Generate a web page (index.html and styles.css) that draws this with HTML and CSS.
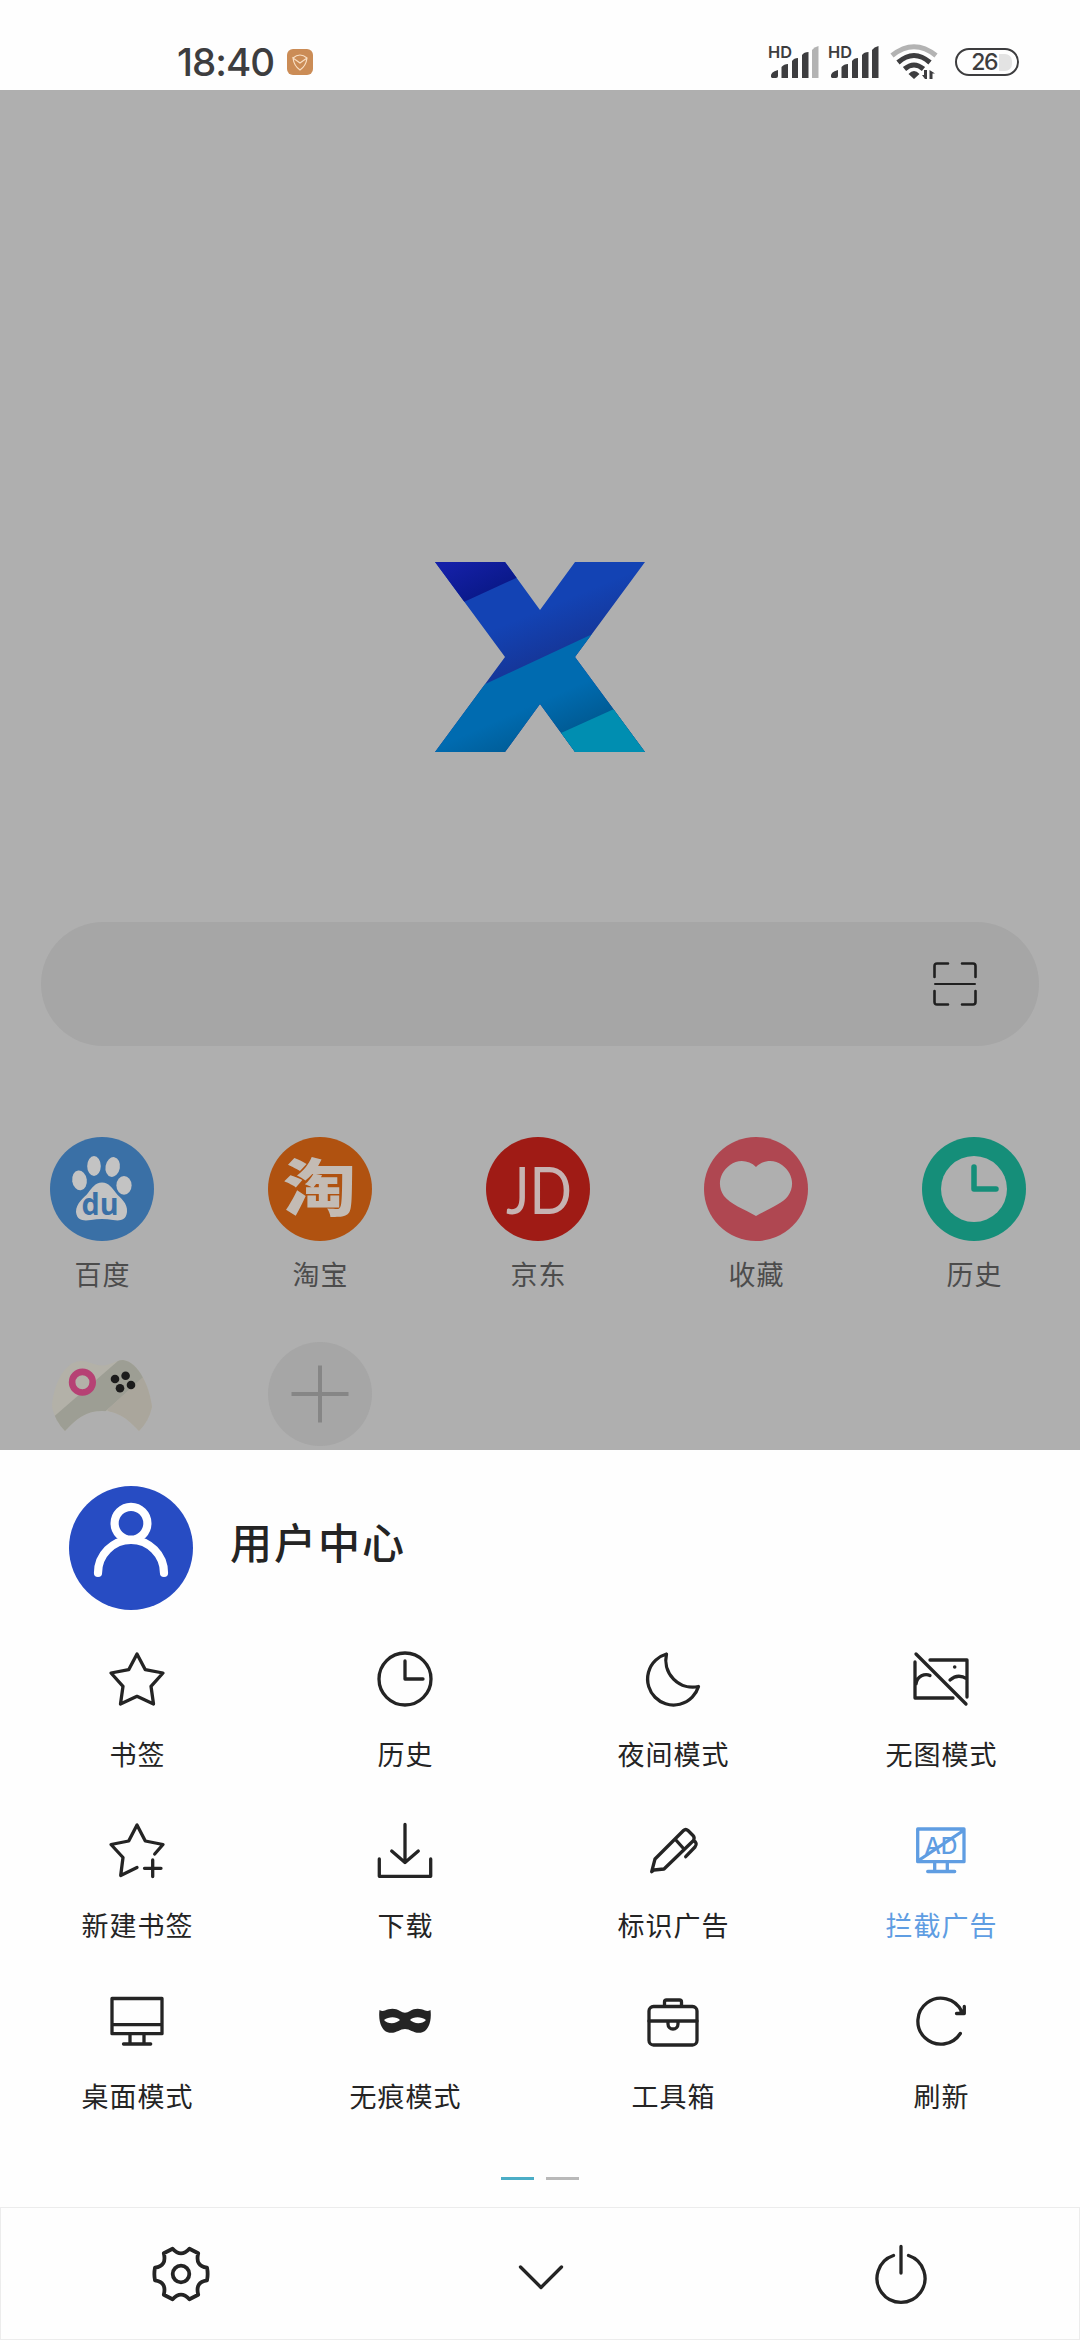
FILE: index.html
```html
<!DOCTYPE html>
<html lang="zh-CN">
<head>
<meta charset="utf-8">
<title>浏览器</title>
<link rel="stylesheet" href="styles.css">
</head>
<body>
<header class="status">
  <div class="status-left">
    <span class="time">18:40</span>
    <svg class="badge" viewBox="0 0 26 26"><rect width="26" height="26" rx="6" fill="#cb8c56"/><path d="M6 9Q13 3 20 9Q19 17 13 21Q7 17 6 9L13 14L20 9" fill="none" stroke="#f9dfc3" stroke-width="1.2"/></svg>
  </div>
  <div class="status-right">
    <svg class="signal" viewBox="0 0 50 34"><text class="hd" x="-1" y="13" textLength="24" lengthAdjust="spacingAndGlyphs">HD</text><g fill="#3d3d3f"><path d="M2 32Q1 27 9 25V31Q9 33 7 33H3ZM12.500 22Q15 19 19 19V33H12.500ZM23 16Q25 13 29 13V33H23ZM33 10Q35 7 39.500 7V33H33Z"/><path d="M43 5Q45 2 49.500 1V33H43Z" fill="#b3b3b3"/></g></svg>
    <svg class="signal" viewBox="0 0 50 34"><text class="hd" x="-1" y="13" textLength="24" lengthAdjust="spacingAndGlyphs">HD</text><path fill="#3d3d3f" d="M2 32Q1 27 9 25V31Q9 33 7 33H3ZM12.500 22Q15 19 19 19V33H12.500ZM23 16Q25 13 29 13V33H23ZM33 10Q35 7 39.500 7V33H33ZM43 5Q45 2 49.500 1V33H43Z"/></svg>
    <svg class="wifi" viewBox="0 0 48 36"><g fill="none" stroke-width="5"><path d="M1 11.500Q23 -6 45 11.500" stroke="#b3b3b3"/><path d="M7 18.500Q23 4.500 39 18.500M13.500 25Q23 17 32.500 25" stroke="#3d3d3f"/></g><path d="M17.500 30Q23 24 28.500 30L23 35ZM33 26h3v9h-2L31 31h2ZM38.500 35V26L44 29.500H41.500V35Z" fill="#3d3d3f"/></svg>
    <div class="battery">26<i></i></div>
  </div>
</header>

<main class="home">
  <svg class="logo" viewBox="0 0 210 190">
    <defs>
      <clipPath id="x"><path d="M0 0H70L105 48L140 0H210L140 95L210 190H140L105 142L70 190H0L70 95Z"/></clipPath>
      <linearGradient id="a" gradientUnits="userSpaceOnUse" x1="35" y1="-10" x2="55" y2="30"><stop offset="0" stop-color="#1520a8"/><stop offset="1" stop-color="#0a198a"/></linearGradient>
      <linearGradient id="b" gradientUnits="userSpaceOnUse" x1="88" y1="55" x2="105" y2="96"><stop offset="0" stop-color="#1343b4"/><stop offset="1" stop-color="#15379b"/></linearGradient>
      <linearGradient id="c" gradientUnits="userSpaceOnUse" x1="138" y1="125" x2="153" y2="159"><stop offset="0" stop-color="#006bb0"/><stop offset="1" stop-color="#005c96"/></linearGradient>
    </defs>
    <g clip-path="url(#x)"><path d="M0 0H210V190H0Z" fill="url(#b)"/><path d="M0 0H116L31 39L0 53Z" fill="url(#a)"/><path d="M0 145.500L210 47.500V190H0Z" fill="url(#c)"/><path d="M84 190L210 133V190Z" fill="#008eb1"/></g>
  </svg>

  <div class="search">
    <svg class="scan" viewBox="0 0 44 44"><path d="M1.500 15V4Q1.500 1.500 4 1.500H15M29 1.500H40Q42.500 1.500 42.500 4V15M42.500 29V40Q42.500 42.500 40 42.500H29M15 42.500H4Q1.500 42.500 1.500 40V29"/><path d="M2 22H42" stroke-width="2"/></svg>
  </div>

  <div class="sites">
    <div class="site">
      <svg viewBox="-52 -52 104 104"><circle r="52" fill="#3a70a6"/><g fill="#c3c3c3"><ellipse cx="-22.500" cy="-8.600" rx="7.300" ry="10" transform="rotate(-8 -22.500 -8.600)"/><ellipse cx="-8" cy="-23" rx="6.800" ry="10"/><ellipse cx="10.700" cy="-22" rx="7.200" ry="10" transform="rotate(10 10.700 -22)"/><ellipse cx="22" cy="-3.600" rx="7.600" ry="9.300"/><path d="M0 -6.500C7 -6.500 10 -1 14 4S26 14 25 23C24 32 17 32 11 31Q0 29 -11 31C-18 32 -25 32 -26 23C-26 14 -18 9 -14 4S-7 -6.500 0 -6.500Z"/></g><text class="du" x="-20.500" y="25.500" textLength="37" lengthAdjust="spacingAndGlyphs">du</text></svg>
      <span>百度</span>
    </div>
    <div class="site">
      <svg viewBox="-52 -52 104 104"><circle r="52" fill="#b05210"/><text class="tao" x="-37" y="22" textLength="73" lengthAdjust="spacingAndGlyphs">淘</text></svg>
      <span>淘宝</span>
    </div>
    <div class="site">
      <svg viewBox="-52 -52 104 104"><circle r="52" fill="#9f1b15"/><text class="jd" x="-32" y="24.500" textLength="66" lengthAdjust="spacingAndGlyphs">JD</text></svg>
      <span>京东</span>
    </div>
    <div class="site">
      <svg viewBox="-52 -52 104 104"><circle r="52" fill="#af4751"/><path d="M0 -22C-7 -29 -18 -30 -26 -24C-37 -16 -39 -3 -32 7C-26 15 -12 20 0 27C12 20 26 15 32 7C39 -3 37 -16 26 -24C18 -30 7 -29 0 -22Z" fill="#afafaf"/></svg>
      <span>收藏</span>
    </div>
    <div class="site">
      <svg viewBox="-52 -52 104 104"><circle r="52" fill="#158e79"/><circle r="33" fill="#afafaf"/><path d="M0 -22V0H22" fill="none" stroke="#158e79" stroke-width="5.500" stroke-linecap="round" stroke-linejoin="round"/></svg>
      <span>历史</span>
    </div>
    <div class="site">
      <svg viewBox="-52 -52 104 104"><defs><clipPath id="pad"><path d="M-22 -33C-14 -34 -9 -28.600 0 -28.600S14 -34 21 -34C37 -32 48 -6 50 13Q47 27 37 37C25 24 16 17 0 17S-25 24 -37 37Q-47 27 -50 13C-49 -8 -38 -32 -22 -33Z"/></clipPath></defs><g clip-path="url(#pad)"><path d="M-52 -40H52V40H-52Z" fill="#b3b1a8"/><path d="M-52 26L24 -40L43 -18L-22 40H-52Z" fill="#9d9e94"/><path d="M42 -18L5 16L37 40H52V-18Z" fill="#aaa69c"/></g><circle cx="-19.600" cy="-11.800" r="10.300" fill="none" stroke="#b64174" stroke-width="6.600"/><g fill="#1c1c1c"><circle cx="13" cy="-15" r="4.300"/><circle cx="23.600" cy="-18.300" r="4.300"/><circle cx="18" cy="-5.700" r="4.300"/><circle cx="29" cy="-9" r="4.300"/></g></svg>
    </div>
    <div class="site">
      <svg viewBox="-52 -52 104 104"><circle r="52" fill="#a6a6a6"/><path d="M-28.500 0H28.500M0 -28.500V28.500" stroke="#868686" stroke-width="4"/></svg>
    </div>
  </div>
</main>

<section class="sheet">
  <div class="user">
    <svg class="avatar" viewBox="-62 -62 124 124"><circle r="62" fill="#274cc3"/><g fill="none" stroke="#fff" stroke-width="8.200" stroke-linecap="round"><circle cy="-24.700" r="16.400"/><path d="M-33 25A33 33 0 0 1 33 25"/></g></svg>
    <span class="user-name">用户中心</span>
  </div>

  <div class="menu">
    <div class="item"><svg viewBox="-30 -30 60 60"><path d="M0 -25L8.300 -9.300L26 -6L14 7.300L16.500 25L0 17.300L-16.500 25L-14 7.300L-26 -6L-8.300 -9.300Z"/></svg><span>书签</span></div>
    <div class="item"><svg viewBox="-30 -30 60 60"><circle r="26"/><path d="M0 -18V0H18"/></svg><span>历史</span></div>
    <div class="item"><svg viewBox="-30 -30 60 60"><path d="M-6.500 -25A26 26 0 1 0 25.500 7.500A27 27 0 0 1 -6.500 -25Z"/></svg><span>夜间模式</span></div>
    <div class="item"><svg viewBox="-30 -30 60 60"><path d="M-25 -25L25 25M-11 -19H26V18M-26 -17V19H12M-25 5C-24 -3 -16 -6 -11 -3.500M9 1Q17 -6 26 0"/><circle cx="13.700" cy="-12" r="1.800" fill="currentColor" stroke="none"/></svg><span>无图模式</span></div>
    <div class="item"><svg viewBox="-30 -30 60 60"><path d="M17.700 4L26 -5.500L8.300 -9L0 -25L-8.300 -9L-26 -5.500L-14 7.500L-16.300 25.500L0 17.500M15.700 10V26.500M7.500 18.300H24"/></svg><span>新建书签</span></div>
    <div class="item"><svg viewBox="-30 -30 60 60"><path d="M0 -25.500V12.500M-13.300 1L0 12.500L13.300 1M-25.700 9V26.300H25.700V9"/></svg><span>下载</span></div>
    <div class="item"><svg viewBox="-30 -30 60 60"><path d="M-21.300 21.700L-18 9L10.500 -19.500Q12.700 -21.700 15 -19.500L20 -14.500Q22 -12.500 20.500 -9.500L-9 19L-19 20ZM2 -11L10.500 -1.500M20.500 -9.500Q25 -7 22 -3L12.700 6.700"/></svg><span>标识广告</span></div>
    <div class="item active"><svg viewBox="-30 -30 60 60"><path d="M-23.300 -21H23V11.700H-23.300ZM-21 9.500L21 -18.500M-6.300 12V21.500M6.300 12V21.500M-13.300 21.500H13.700"/><text class="ad" x="-16.500" y="4" textLength="33" lengthAdjust="spacingAndGlyphs">AD</text></svg><span>拦截广告</span></div>
    <div class="item"><svg viewBox="-30 -30 60 60"><path d="M-25 -22.500H25V12.700H-25ZM-25 3.700H25M-7 13V23M7 13V23M-13.500 23H13.700"/></svg><span>桌面模式</span></div>
    <div class="item"><svg viewBox="-30 -30 60 60"><path fill="currentColor" stroke="none" fill-rule="evenodd" d="M-25.500 -11Q-23 -9.500 -20 -10.500C-16 -12.500 -10 -13.500 -5 -10Q0 -6.500 5 -10C10 -13.500 16 -12.500 20 -10.500Q23 -9.500 25.500 -11C27 1 23 9 18 11C10 14 6 8 0 8S-10 14 -18 11C-23 9 -27 1 -25.500 -11ZM-21 -1C-16 -5 -8 -4.500 -5 -1C-9 3 -17 3.500 -21 -1ZM21 -1C16 -5 8 -4.500 5 -1C9 3 17 3.500 21 -1Z"/></svg><span>无痕模式</span></div>
    <div class="item"><svg viewBox="-30 -30 60 60"><rect x="-24" y="-14.500" width="48" height="38.500" rx="4.500"/><path d="M-8.500 -15V-19Q-8.500 -21 -6.500 -21H6.500Q8.500 -21 8.500 -19V-15M-24 0H24M-5 0V3A5 5 0 0 0 5 3V0"/></svg><span>工具箱</span></div>
    <div class="item"><svg viewBox="-30 -30 60 60"><path d="M19.300 12.500A23 23 0 1 1 20.500 -10M23.300 -14.500V-7.500H15.500M20 -10L23 -7.500"/></svg><span>刷新</span></div>
  </div>

  <div class="pager"><i class="on"></i><i></i></div>
</section>

<nav class="bottom">
  <svg viewBox="-30 -30 60 60"><path stroke-width="3.800" d="M-8.400 -25.300Q0 -16 8.400 -25.300L17.200 -20.700Q14 -8 26 -6.300Q27.300 0 26 6.300Q14 8 17.200 20.700L8.400 25.300Q0 16 -8.400 25.300L-17.200 20.700Q-14 8 -26 6.300Q-27.300 0 -26 -6.300Q-14 -8 -17.200 -20.700Z"/><circle r="8.300" stroke-width="3.800"/></svg>
  <svg viewBox="-30 -30 60 60"><path d="M-20.500 -7L0 13.500L20.500 -7"/></svg>
  <svg viewBox="-30 -30 60 60"><path d="M-7.500 -18.500A24 24 0 1 0 7.500 -18.500M0 -27.500V-1"/></svg>
</nav>
</body>
</html>
```
FILE: styles.css
```css
* { box-sizing: border-box; }

body {
  margin: 0;
  width: 1080px;
  height: 2340px;
  display: flex;
  flex-direction: column;
  background: #fefefe;
  color: #242424;
  font-family: "Noto Sans CJK SC", sans-serif;
  overflow: hidden;
}

svg { display: block; flex: none; overflow: visible; }

.status {
  height: 90px;
  padding: 34px 61px 0 177px;
  display: flex;
  justify-content: space-between;
  align-items: flex-start;
  color: #3d3d3f;
}
.status-left { display: flex; align-items: center; gap: 13px; height: 56px; }
.time { width: 97px; font: 500 38.500px/56px Inter, sans-serif; white-space: nowrap; letter-spacing: -1px; }
.badge { width: 26px; height: 26px; }
.status-right { display: flex; align-items: center; height: 56px; }
.signal { width: 50px; height: 34px; margin-right: 10px; }
.hd { font: 600 16.500px Inter, sans-serif; fill: #3d3d3f; }
.wifi { width: 48px; height: 36px; margin: 0 16px 0 2px; }
.battery {
  width: 64px;
  height: 28px;
  border: 2.500px solid #3d3d3f;
  border-radius: 14px;
  display: flex;
  align-items: center;
  justify-content: flex-end;
  gap: 2px;
  padding-right: 5px;
  font: 500 23px/23px Inter, sans-serif;
  letter-spacing: -1.500px;
}
.battery i { width: 13px; height: 17px; background: #e3e3e3; border-radius: 0 7px 7px 0; }

.home {
  height: 1360px;
  background: #afafaf;
  display: flex;
  flex-direction: column;
  overflow: hidden;
}
.logo { width: 210px; height: 190px; margin: 472px 0 170px 435px; }
.search {
  flex: none;
  height: 124px;
  margin: 0 41px;
  padding-right: 62px;
  border-radius: 62px;
  background: #a6a6a6;
  display: flex;
  align-items: center;
  justify-content: flex-end;
}
.scan { width: 44px; height: 44px; fill: none; stroke: #202020; stroke-width: 2.600; stroke-linecap: round; }
.sites {
  flex: none;
  margin: 91px 0 0 -7px;
  display: grid;
  grid-template-columns: repeat(5, 218px);
  grid-auto-rows: 205px;
}
.site { display: flex; flex-direction: column; align-items: center; gap: 13px; }
.site svg { width: 104px; height: 104px; }
.site span { font-size: 27px; line-height: 40px; letter-spacing: 1px; color: #4c4c4c; padding-left: 1px; }
.du { font: 700 30px "Open Sans", sans-serif; fill: #3a70a6; }
.tao { font: 900 62px "Noto Sans CJK SC", sans-serif; fill: #c3bbb4; }
.jd { font: 400 66px Lato, sans-serif; fill: #c6b3b2; }

.sheet { height: 757px; padding: 36px 0 0; display: flex; flex-direction: column; }
.user { display: flex; align-items: center; padding-left: 69px; gap: 37px; height: 124px; }
.avatar { width: 124px; height: 124px; }
.user-name { font-size: 42px; font-weight: 500; line-height: 60px; letter-spacing: 2px; padding-bottom: 14px; }
.menu {
  display: grid;
  grid-template-columns: repeat(4, 268px);
  grid-auto-rows: 171px;
  padding: 39px 0 0 3px;
}
.item { display: flex; flex-direction: column; align-items: center; gap: 25px; }
.item svg, .bottom svg {
  width: 60px;
  height: 60px;
  fill: none;
  stroke: currentColor;
  stroke-width: 3.300;
  stroke-linecap: round;
  stroke-linejoin: round;
}
.item span { font-size: 27px; line-height: 40px; letter-spacing: 1px; padding-left: 1px; }
.item.active { color: #5f9de2; }
.ad { font: 500 23px Inter, sans-serif; fill: currentColor; stroke: none; }
.pager { display: flex; justify-content: center; gap: 12px; margin-top: 15px; }
.pager i { width: 33px; height: 3px; background: #b9b9b9; }
.pager .on { background: #4badc6; }

.bottom {
  height: 133px;
  border: 1px solid #ececec;
  display: grid;
  grid-template-columns: repeat(3, 360px);
  place-items: center;
}
```
